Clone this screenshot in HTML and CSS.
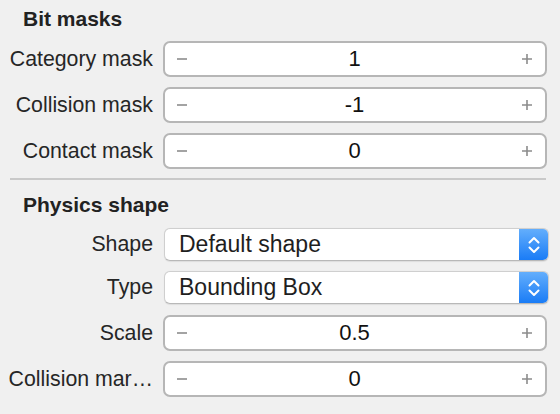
FILE: index.html
```html
<!DOCTYPE html>
<html>
<head>
<meta charset="utf-8">
<link rel="stylesheet" href="styles.css">
</head>
<body>
<div class="panel">
  <div class="heading first">Bit masks</div>
  <div class="rows">
    <div class="row">
      <div class="label">Category mask</div>
      <div class="stepper">
        <span class="btn"><svg width="12" height="12" viewBox="0 0 12 12"><path d="M1 6H11" stroke="#8c8c8c" stroke-width="1.6"/></svg></span>
        <span class="value">1</span>
        <span class="btn"><svg width="12" height="12" viewBox="0 0 12 12"><path d="M1 6H11M6 1V11" stroke="#8c8c8c" stroke-width="1.6"/></svg></span>
      </div>
    </div>
    <div class="row">
      <div class="label">Collision mask</div>
      <div class="stepper">
        <span class="btn"><svg width="12" height="12" viewBox="0 0 12 12"><path d="M1 6H11" stroke="#8c8c8c" stroke-width="1.6"/></svg></span>
        <span class="value">-1</span>
        <span class="btn"><svg width="12" height="12" viewBox="0 0 12 12"><path d="M1 6H11M6 1V11" stroke="#8c8c8c" stroke-width="1.6"/></svg></span>
      </div>
    </div>
    <div class="row">
      <div class="label">Contact mask</div>
      <div class="stepper">
        <span class="btn"><svg width="12" height="12" viewBox="0 0 12 12"><path d="M1 6H11" stroke="#8c8c8c" stroke-width="1.6"/></svg></span>
        <span class="value">0</span>
        <span class="btn"><svg width="12" height="12" viewBox="0 0 12 12"><path d="M1 6H11M6 1V11" stroke="#8c8c8c" stroke-width="1.6"/></svg></span>
      </div>
    </div>
  </div>
  <div class="separator"></div>
  <div class="heading second">Physics shape</div>
  <div class="rows">
    <div class="row popup-row">
      <div class="label">Shape</div>
      <div class="popup">
        <span class="popup-text">Default shape</span>
        <span class="arrows"><svg width="14" height="20" viewBox="0 0 14 20"><path d="M2.5 7.5L7 3L11.5 7.5M2.5 12.5L7 17L11.5 12.5" fill="none" stroke="#fff" stroke-width="2" stroke-linecap="round" stroke-linejoin="round"/></svg></span>
      </div>
    </div>
    <div class="row popup-row">
      <div class="label">Type</div>
      <div class="popup">
        <span class="popup-text">Bounding Box</span>
        <span class="arrows"><svg width="14" height="20" viewBox="0 0 14 20"><path d="M2.5 7.5L7 3L11.5 7.5M2.5 12.5L7 17L11.5 12.5" fill="none" stroke="#fff" stroke-width="2" stroke-linecap="round" stroke-linejoin="round"/></svg></span>
      </div>
    </div>
    <div class="row after-popup">
      <div class="label">Scale</div>
      <div class="stepper">
        <span class="btn"><svg width="12" height="12" viewBox="0 0 12 12"><path d="M1 6H11" stroke="#8c8c8c" stroke-width="1.6"/></svg></span>
        <span class="value">0.5</span>
        <span class="btn"><svg width="12" height="12" viewBox="0 0 12 12"><path d="M1 6H11M6 1V11" stroke="#8c8c8c" stroke-width="1.6"/></svg></span>
      </div>
    </div>
    <div class="row">
      <div class="label">Collision mar…</div>
      <div class="stepper">
        <span class="btn"><svg width="12" height="12" viewBox="0 0 12 12"><path d="M1 6H11" stroke="#8c8c8c" stroke-width="1.6"/></svg></span>
        <span class="value">0</span>
        <span class="btn"><svg width="12" height="12" viewBox="0 0 12 12"><path d="M1 6H11M6 1V11" stroke="#8c8c8c" stroke-width="1.6"/></svg></span>
      </div>
    </div>
  </div>
</div>
</body>
</html>
```
FILE: styles.css
```css
html, body {
  margin: 0;
  padding: 0;
  background: #f0f0f0;
}
body {
  width: 560px;
  height: 414px;
  overflow: hidden;
  font-family: "Liberation Sans", Arial, sans-serif;
  color: #262626;
}
.panel {
  padding: 0 13px 0 10px;
}
.heading {
  font-weight: bold;
  font-size: 21px;
  line-height: 24px;
  padding-left: 13px;
  color: #222;
}
.heading.first {
  padding-top: 7px;
  margin-bottom: 10px;
}
.heading.second {
  padding-top: 13px;
  margin-bottom: 11px;
}
.rows {
  display: flex;
  flex-direction: column;
  gap: 10px;
}
.row {
  display: flex;
  align-items: center;
  gap: 10px;
}
.row.after-popup {
  margin-top: 1px;
}
.label {
  width: 143px;
  flex: none;
  display: flex;
  justify-content: flex-end;
  font-size: 21.3px;
  white-space: nowrap;
}
.stepper {
  flex: 1;
  height: 36px;
  box-sizing: border-box;
  border: 2px solid #b6b6b6;
  border-radius: 7px;
  background: #fff;
  display: flex;
  align-items: center;
  padding: 0 12px 0 11px;
}
.btn {
  display: flex;
  width: 12px;
  height: 12px;
}
.value {
  flex: 1;
  text-align: center;
  font-size: 22px;
  color: #111;
}
.popup {
  flex: 1;
  height: 33px;
  box-sizing: border-box;
  border: 1px solid #cfcfcf;
  border-bottom-color: #b8b8b8;
  border-radius: 6px;
  background: #fff;
  display: flex;
  align-items: stretch;
  overflow: hidden;
  margin-left: 1px;
  margin-right: -2px;
  box-shadow: 0 0.5px 1px rgba(0,0,0,0.08);
}
.popup-text {
  flex: 1;
  font-size: 23px;
  color: #1e1e1e;
  padding-left: 14px;
  display: flex;
  align-items: center;
}
.arrows {
  width: 29px;
  background: linear-gradient(#63aefc, #1a7cf6);
  display: flex;
  align-items: center;
  justify-content: center;
}
.separator {
  height: 2px;
  background: #c9c9c9;
  margin: 9px 1px 0 0;
}
```
